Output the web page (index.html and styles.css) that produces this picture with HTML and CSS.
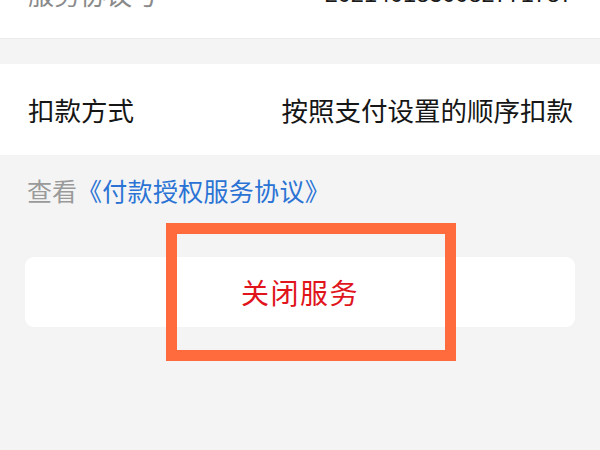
FILE: index.html
```html
<!DOCTYPE html>
<html lang="zh">
<head>
<meta charset="utf-8">
<link rel="stylesheet" href="styles.css">
</head>
<body>
<div class="panel top">
  <div class="row-cut">
    <span class="label-gray">服务协议号</span>
    <span class="num">2021401830082771787</span>
  </div>
</div>
<div class="panel row">
  <span class="label">扣款方式</span>
  <span class="value">按照支付设置的顺序扣款</span>
</div>
<div class="agree"><span class="see">查看</span><span class="link">《付款授权服务协议》</span></div>
<div class="btn-wrap">
  <div class="btn">关闭服务</div>
  <div class="mark"></div>
</div>
</body>
</html>
```
FILE: styles.css
```css
html, body {
  margin: 0;
  padding: 0;
  background: #f4f4f4;
  font-family: "Noto Sans CJK SC", "Noto Sans", sans-serif;
}
body {
  width: 600px;
  height: 450px;
  overflow: hidden;
}
.panel {
  background: #fff;
}
.top {
  height: 39px;
  overflow: hidden;
  display: flex;
  align-items: flex-end;
  border-bottom: 1px solid #ececec;
  box-sizing: border-box;
}
.row-cut {
  flex: 1;
  display: flex;
  justify-content: space-between;
  align-items: flex-end;
  padding: 0 27px 31px 28px;
  line-height: 26px;
}
.label-gray {
  font-size: 26px;
  color: #8a8a8a;
}
.num {
  font-family: "Liberation Sans", Arial, sans-serif;
  font-size: 23.5px;
  color: #1a1a1a;
}
.row {
  margin-top: 25px;
  height: 91px;
  display: flex;
  align-items: center;
  justify-content: space-between;
  padding: 0 27px 0 28px;
  font-size: 26.5px;
  color: #161616;
}
.agree {
  margin-top: 23px;
  padding-left: 27px;
  font-size: 25px;
  line-height: 24px;
}
.see {
  color: #9a9a9a;
}
.link {
  color: #2a73d4;
  letter-spacing: 0.3px;
}
.btn-wrap {
  position: relative;
  margin: 55px 25px 0 25px;
}
.btn {
  height: 70px;
  background: #fff;
  border-radius: 9px;
  display: flex;
  align-items: center;
  justify-content: center;
  font-size: 28px;
  color: #e0141a;
  letter-spacing: 1.5px;
}
.mark {
  position: absolute;
  left: 141px;
  top: -34px;
  width: 290px;
  height: 138px;
  box-sizing: border-box;
  border: 11px solid #ff6b3d;
}
```
